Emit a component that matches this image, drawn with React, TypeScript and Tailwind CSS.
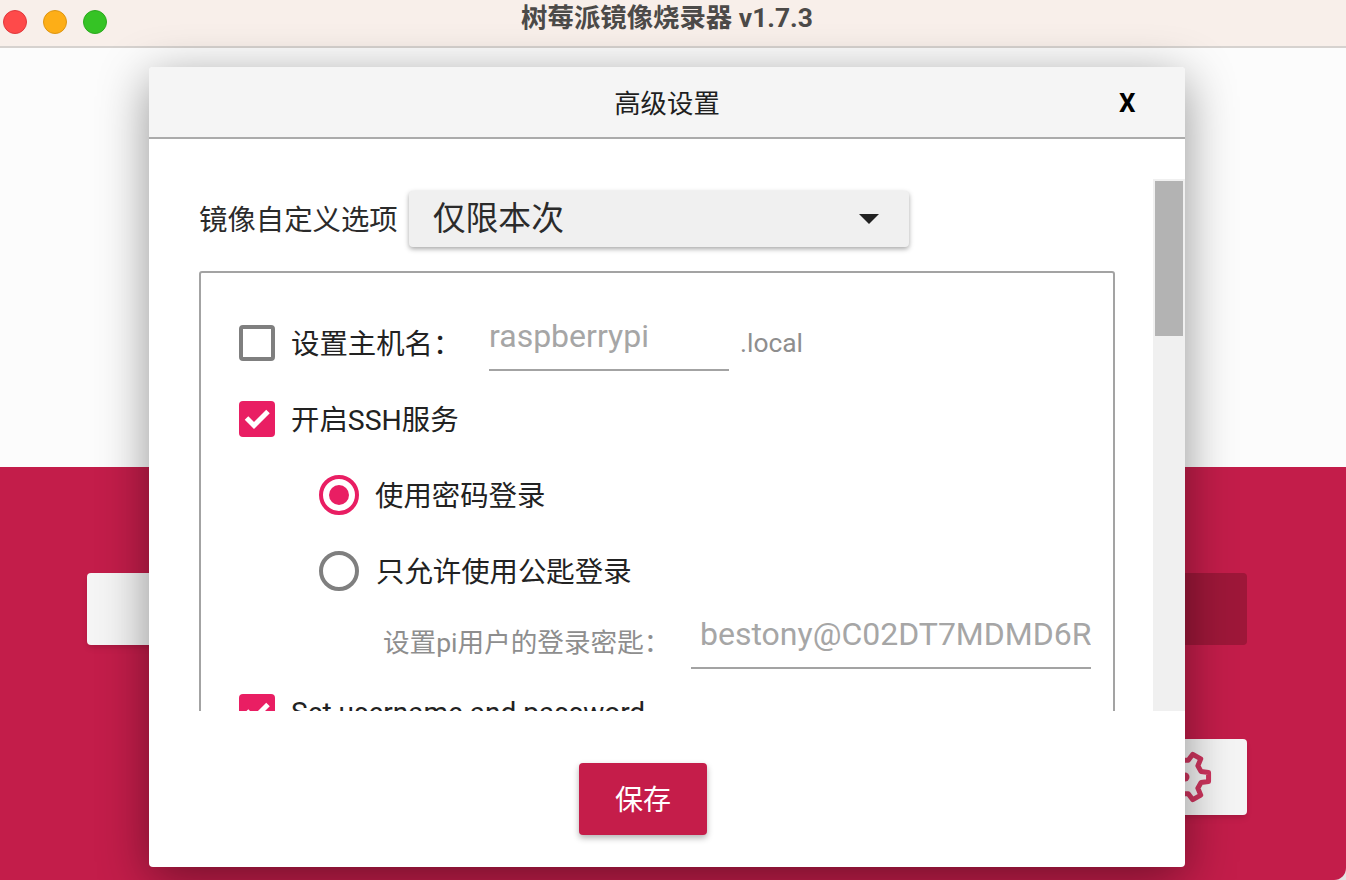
const F = "font-['Roboto','Noto_Sans_CJK_SC',sans-serif]";

function gearPath(): string {
  const cx = 32, cy = 32, R = 24, r = 17;
  const pts: string[] = [];
  for (let i = 0; i < 6; i++) {
    const a = i * 60;
    for (const [rad, off] of [[r, -19], [R, -11], [R, 11], [r, 19]] as const) {
      const t = ((a + off) * Math.PI) / 180;
      pts.push(`${(cx + rad * Math.cos(t)).toFixed(2)} ${(cy + rad * Math.sin(t)).toFixed(2)}`);
    }
  }
  return `M${pts.join(" L")} Z`;
}

function Check({ on }: { on: boolean }) {
  return on ? (
    <span className="w-9 h-9 shrink-0 rounded-[4px] bg-[#e91e63]">
      <svg width="36" height="36" viewBox="0 0 36 36" fill="none">
        <path d="M7.5 17 L15 24.5 L29 10.5" stroke="#fff" strokeWidth="5" />
      </svg>
    </span>
  ) : (
    <span className="w-9 h-9 shrink-0 rounded-[4px] border-[4px] border-[#7f7f7f]" />
  );
}

function Radio({ on }: { on: boolean }) {
  return on ? (
    <span className="w-10 h-10 shrink-0 rounded-full border-[4px] border-[#e91e63] flex items-center justify-center">
      <span className="w-5 h-5 rounded-full bg-[#e91e63]" />
    </span>
  ) : (
    <span className="w-10 h-10 shrink-0 rounded-full border-[4px] border-[#7f7f7f]" />
  );
}

export default function App() {
  return (
    <div className={`${F} relative h-[880px] w-[1346px] overflow-hidden flex flex-col bg-[#e4e4e4]`}>
      {/* window title bar */}
      <div className="h-[48px] shrink-0 bg-[#f8efea] border-b-2 border-[#d6d2cf] flex items-center relative">
        <div className="flex gap-[16px] pl-[3px] pb-[2px]">
          <span className="w-6 h-6 rounded-full bg-[#fe4a4a] border border-[#e0383c]" />
          <span className="w-6 h-6 rounded-full bg-[#fdae17] border border-[#dd9512]" />
          <span className="w-6 h-6 rounded-full bg-[#35c325] border border-[#2ba91e]" />
        </div>
        <div className="flex-1 text-center pb-[10px] pr-[119px] text-[26.4px] leading-[30px] font-bold text-[#4c4a48]">
          树莓派镜像烧录器 v1.7.3
        </div>
      </div>

      {/* application behind the dialog */}
      <div className="h-[419px] shrink-0 bg-[#fcfcfc]" />
      <div className="flex-1 bg-[#c31d4a] rounded-br-[12px] px-[99px] pt-[106px] flex flex-col">
        <div className="flex justify-between -ml-[12px]">
          <div className="w-[260px] h-[72px] rounded-[4px] bg-[#f5f5f5] shadow-md" />
          <div className="w-[260px] h-[72px] rounded-[4px] bg-[#9e1739]" />
        </div>
        <div className="flex justify-end mt-[94px]">
          <div className="w-[170px] h-[76px] rounded-[4px] bg-[#f5f5f5] shadow-md flex items-center pl-[76px]">
            <svg width="64" height="64" viewBox="0 0 64 64" fill="none" className="blur-[0.5px]">
              <path d={gearPath()} stroke="#d0355f" strokeWidth="5" strokeLinejoin="round" />
              <circle cx="32" cy="32" r="4.5" fill="#d0355f" />
            </svg>
          </div>
        </div>
      </div>

      {/* dialog */}
      <div className="absolute left-[149px] top-[67px] w-[1036px] h-[800px] bg-white rounded-[4px] shadow-[0_12px_50px_rgba(0,0,0,0.42)] flex flex-col overflow-hidden">
        <div className="h-[72px] shrink-0 bg-[#f5f5f5] border-b-2 border-[#ababab] flex items-center relative">
          <div className="w-full text-center text-[26.4px] leading-[32px] text-[#1f1f1f] pt-[4px]">高级设置</div>
          <span className="absolute left-[970px] top-[20px] text-[26px] leading-[32px] font-bold text-black">X</span>
        </div>

        <div className="h-[572px] shrink-0 flex overflow-hidden text-[28.4px] text-[#222]">
          <div className="w-[1004px] shrink-0 overflow-hidden pl-[50px] pt-[50px]">
            <div className="flex items-center h-[60px] gap-[11px]">
              <span className="leading-[40px] text-[#2b2b2b] pt-[4px] whitespace-nowrap">镜像自定义选项</span>
              <div className="w-[500px] h-[56px] rounded-[4px] bg-[#f0f0f0] shadow-[0_2px_5px_rgba(0,0,0,0.35)] flex items-center justify-between pl-[24px] pr-[30px] text-[32.8px] text-[#2b2b2b]">
                <span className="leading-[40px]">仅限本次</span>
                <span className="w-0 h-0 border-x-[10px] border-x-transparent border-t-[10px] border-t-[#222]" />
              </div>
            </div>

            <div className="mt-[22px] w-[916px] h-[600px] border-2 border-[#a3a3a3] rounded-[3px] pl-[38px] pr-[22px] pt-[40px] flex flex-col">
              <div className="flex items-center h-[60px]">
                <Check on={false} />
                <span className="ml-[16px] w-[198px] leading-[40px] pt-[4px] whitespace-nowrap">设置主机名：</span>
                <div className="w-[240px] h-[60px] border-b-2 border-[#a3a3a3] text-[32px] leading-[50px] text-[#a6a6a6] mt-[-4px]">raspberrypi</div>
                <span className="ml-[11px] text-[26.4px] text-[#8e8e8e] leading-[40px]">.local</span>
              </div>
              <div className="flex items-center h-[60px] mt-[16px]">
                <Check on={true} />
                <span className="ml-[16px] leading-[40px] pt-[4px]">开启SSH服务</span>
              </div>
              <div className="flex items-center h-[60px] mt-[16px] pl-[80px]">
                <Radio on={true} />
                <span className="ml-[16px] leading-[40px] pt-[4px]">使用密码登录</span>
              </div>
              <div className="flex items-center h-[60px] mt-[16px] pl-[80px]">
                <Radio on={false} />
                <span className="ml-[17px] leading-[40px] pt-[4px]">只允许使用公匙登录</span>
              </div>
              <div className="flex items-start h-[54px] mt-[14px] pl-[144px]">
                <span className="w-[308px] leading-[40px] text-[26.6px] text-[#8e8e8e] pt-[8px] whitespace-nowrap">设置pi用户的登录密匙：</span>
                <div className="w-[400px] h-[54px] border-b-2 border-[#a3a3a3] text-[32px] leading-[38px] text-[#a6a6a6] whitespace-nowrap overflow-hidden pl-[9px]">bestony@C02DT7MDMD6R</div>
              </div>
              <div className="flex items-center h-[60px] mt-[13px]">
                <Check on={true} />
                <span className="ml-[16px] text-[28px] leading-[40px] mt-[2px]">Set username and password</span>
              </div>
            </div>
          </div>
          {/* scrollbar */}
          <div className="w-[32px] shrink-0 mt-[40px] bg-[#f0f0f0] p-[2px]">
            <div className="w-[28px] h-[155px] bg-[#b3b3b3]" />
          </div>
        </div>

        <div className="flex-1 flex items-start justify-center pt-[52px] pr-[48px]">
          <button className="w-[128px] h-[72px] rounded-[4px] bg-[#c51d4a] text-white text-[28px] pt-[4px] shadow-[0_3px_6px_rgba(0,0,0,0.3)]">保存</button>
        </div>
      </div>
    </div>
  );
}
